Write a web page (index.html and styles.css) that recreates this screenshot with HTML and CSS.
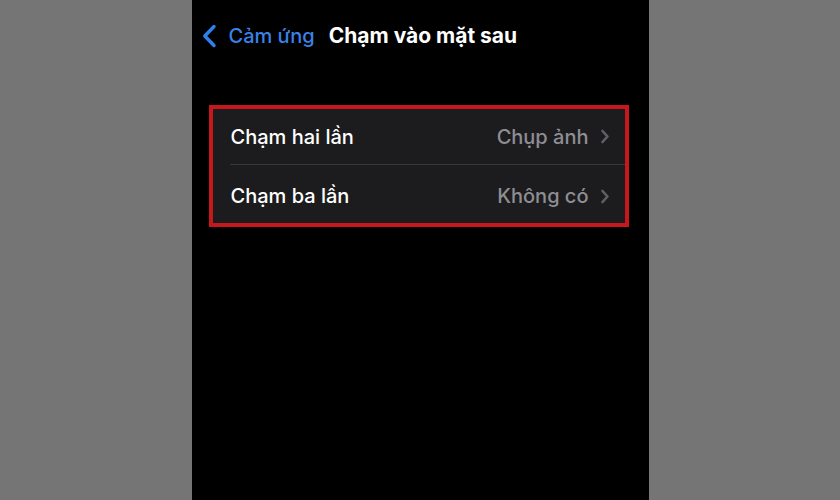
FILE: index.html
```html
<!DOCTYPE html>
<html lang="vi">
<head>
<meta charset="utf-8">
<link rel="stylesheet" href="styles.css">
</head>
<body>
<div class="phone">
  <div class="nav">
    <div class="back">
      <svg class="chev-back" width="15" height="24" viewBox="0 0 15 24"><path d="M12 2.5 L2.8 12 L12 21.5" fill="none" stroke="#2f80ed" stroke-width="3.4" stroke-linecap="round" stroke-linejoin="round"/></svg>
      <span class="back-label">Cảm ứng</span>
    </div>
    <div class="title">Chạm vào mặt sau</div>
  </div>
  <div class="highlight">
    <div class="card">
      <div class="row row-first">
        <span class="label">Chạm hai lần</span>
        <span class="value">Chụp ảnh</span>
        <svg class="chev" width="10" height="15" viewBox="0 0 10 15"><path d="M2.5 2 L7.5 7.5 L2.5 13" fill="none" stroke="#616165" stroke-width="2.6" stroke-linecap="round" stroke-linejoin="round"/></svg>
      </div>
      <div class="sep"></div>
      <div class="row row-last">
        <span class="label">Chạm ba lần</span>
        <span class="value">Không có</span>
        <svg class="chev" width="10" height="15" viewBox="0 0 10 15"><path d="M2.5 2 L7.5 7.5 L2.5 13" fill="none" stroke="#616165" stroke-width="2.6" stroke-linecap="round" stroke-linejoin="round"/></svg>
      </div>
    </div>
  </div>
</div>
</body>
</html>
```
FILE: styles.css
```css
html, body {
  margin: 0;
  height: 100%;
}
body {
  background: #757575;
  display: flex;
  justify-content: center;
  font-family: Inter, "Noto Sans", sans-serif;
}
.phone {
  width: 457px;
  height: 500px;
  background: #000;
  box-sizing: border-box;
  padding: 24px 0 0 10px;
}
.nav {
  display: flex;
  align-items: center;
  height: 23px;
}
.back {
  display: flex;
  align-items: center;
  gap: 12px;
}
.back-label {
  color: #3a82e8;
  font-size: 20px;
  font-weight: 500;
}
.title {
  margin-left: 14px;
  color: #fff;
  font-size: 21px;
  font-weight: 700;
}
.highlight {
  margin-top: 58px;
  margin-left: 7px;
  width: 420px;
  box-sizing: border-box;
  border: 4px solid #c8161d;
}
.card {
  background: #1c1c1e;
}
.row {
  display: flex;
  align-items: center;
  box-sizing: border-box;
  padding: 0 15px 0 18px;
}
.row-first {
  height: 55px;
}
.row-last {
  height: 58px;
  padding-top: 4px;
}
.label {
  color: #fff;
  font-size: 20px;
  font-weight: 500;
  flex: 1;
}
.value {
  color: #8e8e93;
  font-size: 20px;
  font-weight: 500;
  margin-right: 11px;
}
.sep {
  height: 1px;
  background: #38383a;
  margin-left: 17px;
}
```
